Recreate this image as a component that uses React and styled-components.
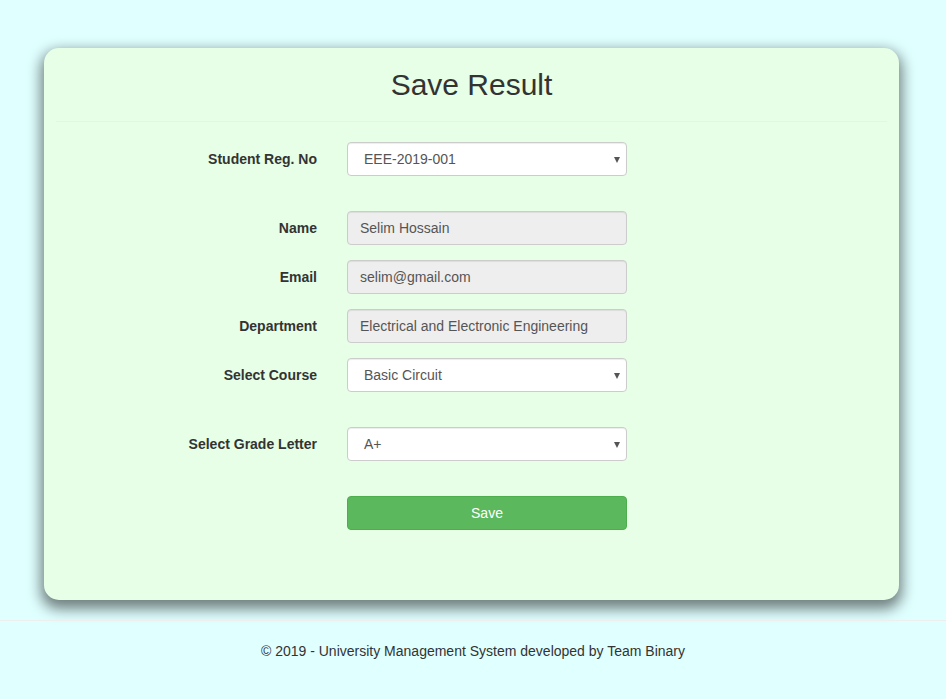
import styled, { createGlobalStyle } from 'styled-components'

const Color = {
  Page: '#e0ffff',
  Card: '#e6ffe6',
  Text: '#333333',
  InputText: '#555555',
  Border: '#cccccc',
  Disabled: '#eeeeee',
  Rule: '#eeeeee',
  Success: '#5cb85c',
  SuccessBorder: '#4cae4c',
  White: '#ffffff'
}

const GlobalStyle = createGlobalStyle`
  * { box-sizing: border-box; }
  body {
    margin: 0;
    background-color: ${Color.Page};
    font-family: "Liberation Sans", Arial, sans-serif;
    font-size: 14px;
    line-height: 1.42857;
    color: ${Color.Text};
  }
`

const Page = styled.div`
  padding-top: 48px;
`

const Card = styled.section`
  width: 855px;
  margin-left: 44px;
  padding: 20px 12px 55px;
  background-color: ${Color.Card};
  border-radius: 15px;
  box-shadow: 0 6px 14px 3px rgba(0, 0, 0, 0.5);
`

const Title = styled.h2`
  margin: 0;
  font-size: 30px;
  font-weight: 500;
  line-height: 1.1;
  text-align: center;
  color: ${Color.Text};
`

const Rule = styled.hr`
  margin: 20px 0 20px;
  border: 0;
  border-top: 1px solid ${Color.Rule};
`

const Form = styled.form`
  display: flex;
  flex-direction: column;
`

const Row = styled.div`
  display: grid;
  grid-template-columns: 261px 280px;
  column-gap: 30px;
  align-items: center;
  margin-bottom: ${p => (p.$spaced ? '35px' : '15px')};
`

const Label = styled.label`
  padding-top: 2px;
  font-weight: 700;
  text-align: right;
`

const Field = styled.div`
  height: 34px;
  padding: 6px 12px;
  border: 1px solid ${Color.Border};
  border-radius: 4px;
  background-color: ${p => (p.$disabled ? Color.Disabled : Color.White)};
  color: ${Color.InputText};
  line-height: 20px;
  box-shadow: inset 0 1px 1px rgba(0, 0, 0, 0.075);
  white-space: nowrap;
  overflow: hidden;
`

const SelectBox = styled(Field)`
  position: relative;
  padding-left: 16px;
`

const Caret = styled.span`
  position: absolute;
  right: 6px;
  top: 14px;
  width: 0;
  height: 0;
  border-left: 3.5px solid transparent;
  border-right: 3.5px solid transparent;
  border-top: 6px solid #555;
`

const SaveButton = styled.button`
  grid-column: 2;
  height: 34px;
  border: 1px solid ${Color.SuccessBorder};
  border-radius: 4px;
  background-color: ${Color.Success};
  color: ${Color.White};
  font-family: inherit;
  font-size: 14px;
`

const FooterRule = styled.hr`
  margin: 20px 0 0;
  border: 0;
  border-top: 1px solid ${Color.Rule};
`

const Footer = styled.footer`
  padding-top: 21px;
  text-align: center;
  color: ${Color.Text};
`

function Select({ value }) {
  return (
    <SelectBox>
      {value}
      <Caret />
    </SelectBox>
  )
}

function App() {
  return (
    <Page>
      <GlobalStyle />
      <Card>
        <Title>Save Result</Title>
        <Rule />
        <Form>
          <Row $spaced>
            <Label>Student Reg. No</Label>
            <Select value="EEE-2019-001" />
          </Row>
          <Row>
            <Label>Name</Label>
            <Field $disabled>Selim Hossain</Field>
          </Row>
          <Row>
            <Label>Email</Label>
            <Field $disabled>selim@gmail.com</Field>
          </Row>
          <Row>
            <Label>Department</Label>
            <Field $disabled>Electrical and Electronic Engineering</Field>
          </Row>
          <Row $spaced>
            <Label>Select Course</Label>
            <Select value="Basic Circuit" />
          </Row>
          <Row $spaced>
            <Label>Select Grade Letter</Label>
            <Select value="A+" />
          </Row>
          <Row>
            <SaveButton type="button">Save</SaveButton>
          </Row>
        </Form>
      </Card>
      <FooterRule />
      <Footer>© 2019 - University Management System developed by Team Binary</Footer>
    </Page>
  )
}

export default App
